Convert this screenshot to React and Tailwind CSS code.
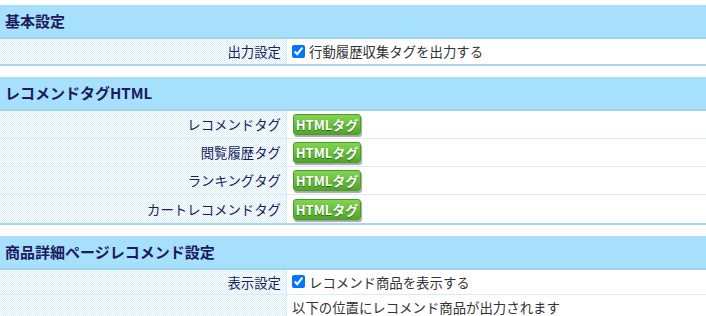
import React from "react";

const checker =
  "[background:repeating-conic-gradient(#d9f0fb_0%_25%,#ffffff_0%_50%)_0_0/2px_2px]";

function Header({ title }) {
  return (
    <div className="h-[34px] flex items-center pl-[5px] bg-[#a6e0fd] border-b-2 border-[#9fd4e8] text-[15px] font-bold text-[#1b1b5e]">
      {title}
    </div>
  );
}

function Row({ label, children, h = "h-[25px]", last }) {
  return (
    <div className={`flex ${h} ${last ? "" : "border-b border-[#d3eef8]"}`}>
      <div
        className={`w-[287px] shrink-0 flex items-center justify-end pr-[5px] text-[13.4px] text-[#1c1c5c] border-r border-[#d3eef8] ${checker}`}
      >
        {label}
      </div>
      <div className="flex-1 flex items-center pl-[5px] text-[13.4px] text-[#333]">
        {children}
      </div>
    </div>
  );
}

function Check({ text }) {
  return (
    <label className="flex items-center gap-[4px]">
      <input
        type="checkbox"
        defaultChecked
        className="w-[13px] h-[13px] m-0 accent-[#0075ff]"
      />
      <span>{text}</span>
    </label>
  );
}

function HtmlButton() {
  return (
    <button className="ml-[1px] h-[21px] w-[68px] rounded-[3px] border border-[#4d9a2a] bg-gradient-to-b from-[#82d54f] to-[#4fa82a] text-white text-[13px] font-bold leading-none shadow-[1px_2px_1px_rgba(0,0,0,0.35)] [text-shadow:0_1px_1px_rgba(0,60,0,0.6)]">
      HTMLタグ
    </button>
  );
}

export default function App() {
  return (
    <div
      className="w-[706px] h-[316px] overflow-hidden bg-white pt-[5px]"
      style={{ fontFamily: '"Noto Sans CJK JP", "Noto Sans", sans-serif' }}
    >
      {/* 基本設定 */}
      <div className="mb-[11px] border-b-2 border-[#a9d9e9]">
        <Header title="基本設定" />
        <Row label="出力設定" last>
          <Check text="行動履歴収集タグを出力する" />
        </Row>
      </div>

      {/* レコメンドタグHTML */}
      <div className="mb-[11px] border-b-2 border-[#a9d9e9]">
        <Header title="レコメンドタグHTML" />
        <Row label="レコメンドタグ" h="h-[28px]">
          <HtmlButton />
        </Row>
        <Row label="閲覧履歴タグ" h="h-[28px]">
          <HtmlButton />
        </Row>
        <Row label="ランキングタグ" h="h-[28px]">
          <HtmlButton />
        </Row>
        <Row label="カートレコメンドタグ" h="h-[28px]" last>
          <HtmlButton />
        </Row>
      </div>

      {/* 商品詳細ページレコメンド設定 */}
      <div>
        <Header title="商品詳細ページレコメンド設定" />
        <Row label="表示設定">
          <Check text="レコメンド商品を表示する" />
        </Row>
        <Row label="" last>
          <span>以下の位置にレコメンド商品が出力されます</span>
        </Row>
      </div>
    </div>
  );
}
